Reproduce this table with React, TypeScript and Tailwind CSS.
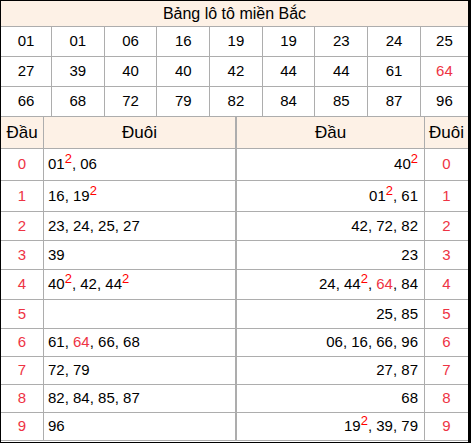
const GRID: string[][] = [
  ['01', '01', '06', '16', '19', '19', '23', '24', '25'],
  ['27', '39', '40', '40', '42', '44', '44', '61', '64'],
  ['66', '68', '72', '79', '82', '84', '85', '87', '96'],
];

// red numbers (last drawn) in the grid
const HOT = new Set(['1-8']);

type Item = { n: string; twice?: boolean; red?: boolean };

const DAU: Item[][] = [
  [{ n: '01', twice: true }, { n: '06' }],
  [{ n: '16' }, { n: '19', twice: true }],
  [{ n: '23' }, { n: '24' }, { n: '25' }, { n: '27' }],
  [{ n: '39' }],
  [{ n: '40', twice: true }, { n: '42' }, { n: '44', twice: true }],
  [],
  [{ n: '61' }, { n: '64', red: true }, { n: '66' }, { n: '68' }],
  [{ n: '72' }, { n: '79' }],
  [{ n: '82' }, { n: '84' }, { n: '85' }, { n: '87' }],
  [{ n: '96' }],
];

const DUOI: Item[][] = [
  [{ n: '40', twice: true }],
  [{ n: '01', twice: true }, { n: '61' }],
  [{ n: '42' }, { n: '72' }, { n: '82' }],
  [{ n: '23' }],
  [{ n: '24' }, { n: '44', twice: true }, { n: '64', red: true }, { n: '84' }],
  [{ n: '25' }, { n: '85' }],
  [{ n: '06' }, { n: '16' }, { n: '66' }, { n: '96' }],
  [{ n: '27' }, { n: '87' }],
  [{ n: '68' }],
  [{ n: '19', twice: true }, { n: '39' }, { n: '79' }],
];

const ROW_H = ['h-[32px]', 'h-[31px]', 'h-[29px]', 'h-[29px]', 'h-[30px]', 'h-[29px]', 'h-[28px]', 'h-[28px]', 'h-[28px]', 'h-[28px]'];

function Numbers({ items }: { items: Item[] }) {
  return (
    <span>
      {items.map((it, i) => (
        <span key={i}>
          {i > 0 && ', '}
          <span className={it.red ? 'text-[#ee3344]' : ''}>{it.n}</span>
          {it.twice && <span className="relative -top-[6px] text-[13px] leading-none text-[#ff0000]">2</span>}
        </span>
      ))}
    </span>
  );
}

export default function App() {
  return (
    <div className="w-[471px] h-[443px] bg-white border-l border-t border-b border-r-[3px] border-black font-['Liberation_Sans',Arial,sans-serif] text-[15px] text-black">
      <div className="h-[26px] bg-[#fdf1e6] border-b border-[#adadad] flex items-center justify-center text-[16px]">
        Bảng lô tô miền Bắc
      </div>

      <div className="grid grid-cols-[51px_repeat(7,52.7px)_1fr]">
        {GRID.map((row, r) =>
          row.map((n, c) => (
            <div
              key={`${r}-${c}`}
              className={`h-[30px] flex items-center justify-center border-b border-[#adadad] ${c < 8 ? 'border-r' : ''} ${HOT.has(`${r}-${c}`) ? 'text-[#ee3344]' : ''}`}
            >
              {n}
            </div>
          ))
        )}
      </div>

      <div className="flex">
        {/* đầu */}
        <div className="w-[235px] border-r border-[#adadad]">
          <div className="h-[32px] grid grid-cols-[43px_1fr] bg-[#fdf1e6] border-b border-[#adadad] text-[17px]">
            <div className="flex items-center justify-center border-r border-[#adadad]">Đầu</div>
            <div className="flex items-center justify-center">Đuôi</div>
          </div>
          {DAU.map((items, i) => (
            <div key={i} className={`${ROW_H[i]} grid grid-cols-[43px_1fr] border-b border-[#adadad]`}>
              <div className="flex items-center justify-center border-r border-[#adadad] text-[#ee3344]">{i}</div>
              <div className="flex items-center pl-[4px]">
                <Numbers items={items} />
              </div>
            </div>
          ))}
        </div>

        {/* đuôi */}
        <div className="flex-1 border-l border-[#adadad]">
          <div className="h-[32px] grid grid-cols-[1fr_43px] bg-[#fdf1e6] border-b border-[#adadad] text-[17px]">
            <div className="flex items-center justify-center border-r border-[#adadad]">Đầu</div>
            <div className="flex items-center justify-center">Đuôi</div>
          </div>
          {DUOI.map((items, i) => (
            <div key={i} className={`${ROW_H[i]} grid grid-cols-[1fr_43px] border-b border-[#adadad]`}>
              <div className="flex items-center justify-end pr-[6px] border-r border-[#adadad]">
                <Numbers items={items} />
              </div>
              <div className="flex items-center justify-center text-[#ee3344]">{i}</div>
            </div>
          ))}
        </div>
      </div>
    </div>
  );
}
